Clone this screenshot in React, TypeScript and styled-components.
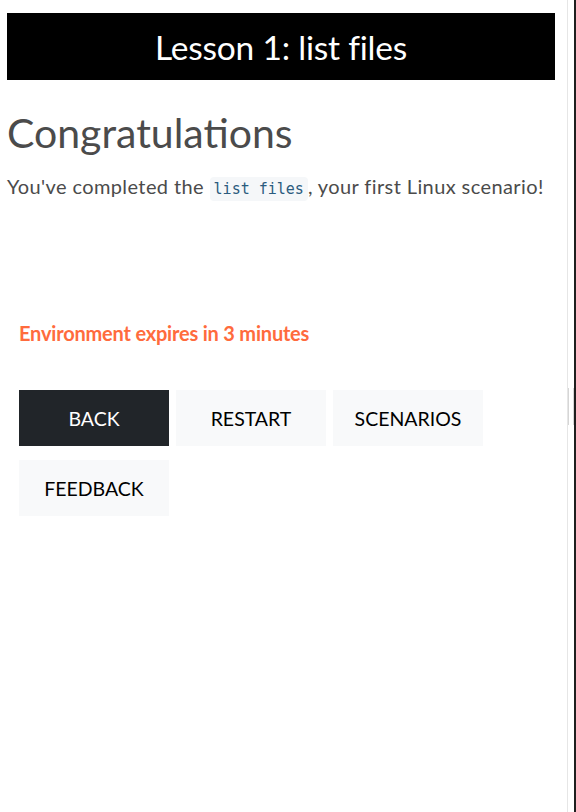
import styled, { createGlobalStyle } from "styled-components";

const GlobalStyle = createGlobalStyle`
  html, body {
    margin: 0;
    padding: 0;
    background: #ffffff;
  }
  body {
    font-family: Lato, "Open Sans", sans-serif;
  }
`;

const Layout = styled.div`
  display: flex;
  height: 812px;
`;

const Pane = styled.main`
  width: 568px;
  box-sizing: border-box;
  padding: 13px 12px 0 7px;
  border-right: 1px solid #e6e6e6;
`;

const Splitter = styled.div`
  flex: 1;
  display: flex;
  align-items: flex-start;
  border-right: 2px solid #1f1f1f;
`;

const Grip = styled.div`
  margin: 388px 0 0 0;
  width: 4px;
  height: 37px;
  border-left: 1px solid #d6d6d6;
  border-right: 1px solid #d6d6d6;
`;

const TitleBar = styled.header`
  height: 67px;
  background: #000000;
  color: #ffffff;
  display: flex;
  align-items: center;
  justify-content: center;
  font-size: 33.5px;
  letter-spacing: -0.2px;
`;

const Heading = styled.h1`
  margin: 29px 0 0;
  font-size: 41px;
  font-weight: 400;
  line-height: 48px;
  color: #4b4b4b;
`;

const Lead = styled.p`
  margin: 15px 0 0;
  font-size: 20px;
  line-height: 28px;
  color: #4b4b4b;
  letter-spacing: 0.4px;
`;

const Code = styled.code`
  font-family: "DejaVu Sans Mono", monospace;
  font-size: 15px;
  letter-spacing: 0;
  color: #2b5b7e;
  background: #f5f7f9;
  border-radius: 4px;
  padding: 3px 4px;
`;

const Session = styled.section`
  padding: 0 12px;
`;

const Expiry = styled.div`
  margin-top: 118px;
  font-size: 20px;
  font-weight: 700;
  color: #ff6b3d;
  letter-spacing: -0.2px;
`;

const Actions = styled.div`
  margin-top: 45px;
  display: flex;
  flex-wrap: wrap;
  column-gap: 7px;
  row-gap: 14px;
`;

const ActionButton = styled.button<{ $primary?: boolean }>`
  width: 150px;
  height: 56px;
  border: none;
  border-radius: 0;
  font-family: Lato, "Open Sans", sans-serif;
  font-size: 19.5px;
  text-transform: uppercase;
  background: ${(p) => (p.$primary ? "#212529" : "#f8f9fa")};
  color: ${(p) => (p.$primary ? "#ffffff" : "#000000")};
  cursor: pointer;
`;

const actions = ["Back", "Restart", "Scenarios", "Feedback"];

const App = (): JSX.Element => {
  return (
    <>
      <GlobalStyle />
      <Layout>
        <Pane>
          <TitleBar>Lesson 1: list files</TitleBar>
          <Heading>Congratulations</Heading>
          <Lead>
            You've completed the <Code>list files</Code>, your first Linux
            scenario!
          </Lead>
          <Session>
            <Expiry>Environment expires in 3 minutes</Expiry>
            <Actions>
              {actions.map((label, index) => (
                <ActionButton key={label} $primary={index === 0}>
                  {label}
                </ActionButton>
              ))}
            </Actions>
          </Session>
        </Pane>
        <Splitter>
          <Grip />
        </Splitter>
      </Layout>
    </>
  );
};

export default App;
